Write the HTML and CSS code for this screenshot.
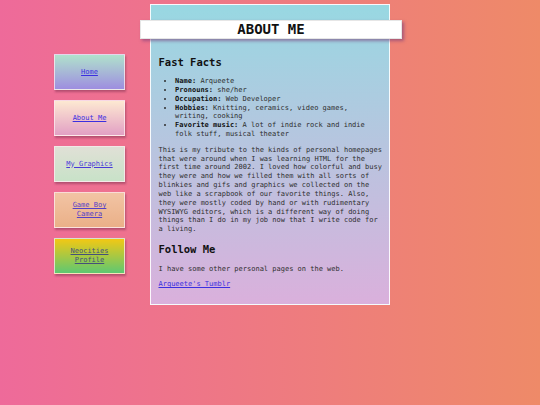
FILE: index.html
```html
<!DOCTYPE html>
<html lang="en">
<head>
<meta charset="utf-8">
<title>About Me</title>
<link rel="stylesheet" href="styles.css">
</head>
<body>
<div class="page">
  <nav class="nav">
    <a class="btn btn-home" href="#">Home</a>
    <a class="btn btn-about" href="#">About Me</a>
    <a class="btn btn-graphics" href="#">My Graphics</a>
    <a class="btn btn-gameboy" href="#">Game Boy Camera</a>
    <a class="btn btn-neo" href="#">Neocities Profile</a>
  </nav>
  <main class="panel">
    <div class="title"><h1>ABOUT ME</h1></div>
    <h2 class="h-facts">Fast Facts</h2>
    <ul class="facts">
      <li><b>Name:</b> Arqueete</li>
      <li><b>Pronouns:</b> she/her</li>
      <li><b>Occupation:</b> Web Developer</li>
      <li><b>Hobbies:</b> Knitting, ceramics, video games, writing, cooking</li>
      <li><b>Favorite music:</b> A lot of indie rock and indie folk stuff, musical theater</li>
    </ul>
    <p class="intro">This is my tribute to the kinds of personal homepages that were around when I was learning HTML for the first time around 2002. I loved how colorful and busy they were and how we filled them with all sorts of blinkies and gifs and graphics we collected on the web like a scrapbook of our favorite things. Also, they were mostly coded by hand or with rudimentary WYSIWYG editors, which is a different way of doing things than I do in my job now that I write code for a living.</p>
    <h2 class="h-follow">Follow Me</h2>
    <p class="other">I have some other personal pages on the web.</p>
    <p class="links"><a href="#">Arqueete's Tumblr</a></p>
  </main>
</div>
</body>
</html>
```
FILE: styles.css
```css
html, body {
  margin: 0;
  padding: 0;
}
body {
  width: 540px;
  height: 405px;
  overflow: hidden;
  background: linear-gradient(to right, #ee6a9a, #ee8a68);
  font-family: "DejaVu Sans Mono", "Liberation Mono", monospace;
  font-size: 7px;
  color: #2e2e2e;
}
.page {
  display: flex;
  align-items: flex-start;
  padding-left: 54px;
}
.nav {
  display: flex;
  flex-direction: column;
  gap: 10px;
  margin-top: 54px;
  width: 71px;
}
.btn {
  box-sizing: border-box;
  height: 36px;
  display: flex;
  align-items: center;
  justify-content: center;
  text-align: center;
  padding: 0 6px;
  line-height: 9px;
  color: #3b2fe0;
  border: 1px solid rgba(255, 235, 240, 0.75);
  box-shadow: 1px 2px 2px rgba(110, 40, 70, 0.45);
}
.btn-home { background: linear-gradient(#b0e2cc, #9e8ee0); }
.btn-about { background: linear-gradient(#fde9d2, #e2a0c4); }
.btn-graphics { background: linear-gradient(#e0e0d6, #c8e2c8); color: #4a3ad8; }
.btn-gameboy { background: linear-gradient(#f2c4a4, #eab088); color: #5540c8; }
.btn-neo { background: linear-gradient(#f2c814, #5ec872); color: #44507a; }

.panel {
  box-sizing: border-box;
  width: 240px;
  margin-top: 4px;
  margin-left: 25px;
  border: 1px solid rgba(255, 255, 255, 0.9);
  background: linear-gradient(#98d8e2, #dab0dc);
  padding: 15px 5.5px 14.5px 7.5px;
}
.title {
  box-sizing: border-box;
  height: 19px;
  margin: 0 -18.5px 0 -18.5px;
  background: #fff;
  border: 1px solid #e6e6e6;
  box-shadow: 2px 2px 3px rgba(120, 60, 120, 0.6);
  display: flex;
  align-items: center;
  justify-content: center;
}
.title h1 {
  margin: 0;
  font-size: 14px;
  line-height: 17px;
  font-weight: bold;
  color: #111;
}
h2 {
  margin: 0;
  font-size: 10.5px;
  line-height: 12px;
  font-weight: bold;
  color: #111;
}
.h-facts { margin-top: 17px; }
.facts {
  margin: 9px 0 0 0;
  padding-left: 16.6px;
  line-height: 8.85px;
}
.facts b { color: #111; }
.intro {
  margin: 6.8px 0 0 0;
  line-height: 8.85px;
}
.h-follow { margin-top: 9px; }
.other {
  margin: 9.6px 0 0 0;
  line-height: 8.85px;
}
.links {
  margin: 6.8px 0 0 0;
  line-height: 8.85px;
}
.links a { color: #3b2fe0; }
```
